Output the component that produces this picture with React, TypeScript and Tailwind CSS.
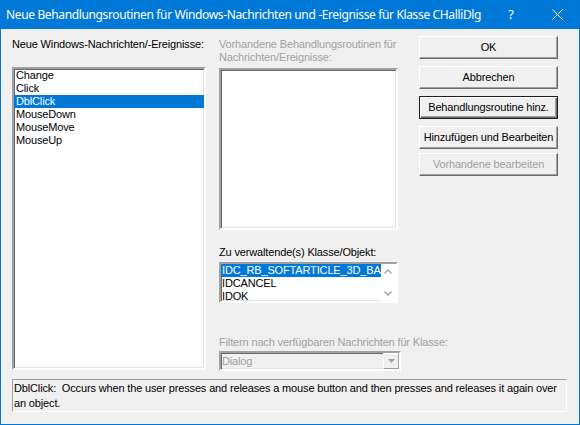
import React from "react";

const sunken =
  "border-2 border-t-[#a0a0a0] border-l-[#a0a0a0] border-r-white border-b-white shadow-[inset_1px_1px_0_#696969,inset_-1px_-1px_0_#e3e3e3]";

function Btn({ label, def, disabled, mt }: { label: string; def?: boolean; disabled?: boolean; mt: string }) {
  return (
    <div
      className={`${mt} h-[23px] w-[139px] flex items-center justify-center bg-[#f0f0f0] ${
        def
          ? "border border-[#1e1e1e] shadow-[inset_1px_1px_0_#ffffff,inset_-1px_-1px_0_#696969,inset_-2px_-2px_0_#a0a0a0]"
          : "border border-t-white border-l-white border-r-[#696969] border-b-[#696969] shadow-[inset_-1px_-1px_0_#a0a0a0]"
      } ${disabled ? "text-[#a0a0a0]" : "text-black"}`}
    >
      {label}
    </div>
  );
}

export default function App() {
  const items = ["Change", "Click", "DblClick", "MouseDown", "MouseMove", "MouseUp"];
  return (
    <div
      className="w-[580px] h-[425px] bg-[#0078d7] flex flex-col overflow-hidden"
      style={{ fontFamily: '"Liberation Sans", Arial, sans-serif' }}
    >
      <div className="h-[29px] flex items-center text-white text-[12px] shrink-0" style={{ fontFamily: '"Noto Sans", "Open Sans", sans-serif' }}>
        <div className="pl-[6px] flex-1 whitespace-nowrap tracking-[-0.36px]">
          Neue Behandlungsroutinen für Windows-Nachrichten und -Ereignisse für Klasse CHalliDlg
        </div>
        <div className="w-[46px] text-center text-[13px]">?</div>
        <div className="w-[46px] flex items-center justify-center">
          <svg width="11" height="11" viewBox="0 0 11 11">
            <path d="M0.5 0.5 L10.5 10.5 M10.5 0.5 L0.5 10.5" stroke="white" strokeWidth="1" />
          </svg>
        </div>
      </div>
      <div className="flex-1 mx-[1px] mb-[1px] bg-[#f0f0f0] flex flex-col text-[11px] leading-[13px] tracking-[-0.15px] pt-[7px] pl-[11px]">
        <div className="flex">
          {/* left column */}
          <div className="w-[194px] flex flex-col">
            <div className="mt-[2px] whitespace-nowrap text-black">Neue Windows-Nachrichten/-Ereignisse:</div>
            <div className={`mt-[16px] h-[303px] bg-white ${sunken} pt-0`}>
              {items.map((it) => (
                <div
                  key={it}
                  className={`h-[13px] pl-[2px] ${it === "DblClick" ? "bg-[#0078d7] text-white" : "text-black"}`}
                >
                  {it}
                </div>
              ))}
            </div>
          </div>
          {/* middle column */}
          <div className="ml-[13px] w-[179px] flex flex-col">
            <div className="mt-[2px] text-[#a0a0a0]">
              <div className="whitespace-nowrap">Vorhandene Behandlungsroutinen für</div>
              <div>Nachrichten/Ereignisse:</div>
            </div>
            <div className={`mt-[4px] h-[162px] bg-white ${sunken}`}></div>
            <div className="mt-[16px] text-black whitespace-nowrap">Zu verwaltende(s) Klasse/Objekt:</div>
            <div className={`mt-[3px] h-[41px] bg-white ${sunken} flex overflow-hidden`}>
              <div className="flex-1 whitespace-nowrap">
                <div className="h-[13px] pl-[1px] bg-[#0078d7] text-white">IDC_RB_SOFTARTICLE_3D_BA</div>
                <div className="h-[13px] pl-[1px] text-black">IDCANCEL</div>
                <div className="h-[13px] pl-[1px] text-black">IDOK</div>
              </div>
              <div className="w-[16px] flex flex-col items-center justify-between py-[5px] bg-white">
                <svg width="8" height="5" viewBox="0 0 8 5">
                  <path d="M0.5 4.5 L4 1 L7.5 4.5" stroke="#a0a0a0" strokeWidth="1.3" fill="none" />
                </svg>
                <svg width="8" height="5" viewBox="0 0 8 5">
                  <path d="M0.5 0.5 L4 4 L7.5 0.5" stroke="#a0a0a0" strokeWidth="1.3" fill="none" />
                </svg>
              </div>
            </div>
            <div className="mt-[33px] text-[#a0a0a0] whitespace-nowrap">Filtern nach verfügbaren Nachrichten für Klasse:</div>
            <div className={`mt-[2px] h-[20px] w-[182px] bg-[#f0f0f0] ${sunken} flex items-center`}>
              <div className="flex-1 pl-[1px] text-[#a0a0a0]">Dialog</div>
              <div className="w-[16px] h-[16px] flex items-center justify-center border border-t-white border-l-white border-r-[#a0a0a0] border-b-[#a0a0a0]">
                <svg width="7" height="4" viewBox="0 0 7 4">
                  <path d="M0 0 L7 0 L3.5 4 Z" fill="#a0a0a0" />
                </svg>
              </div>
            </div>
          </div>
          {/* right column */}
          <div className="ml-[21px] flex flex-col">
            <Btn label="OK" mt="mt-0" />
            <Btn label="Abbrechen" mt="mt-[7px]" />
            <Btn label="Behandlungsroutine hinz." def mt="mt-[7px]" />
            <Btn label="Hinzufügen und Bearbeiten" mt="mt-[7px]" />
            <Btn label="Vorhandene bearbeiten" disabled mt="mt-[4px]" />
          </div>
        </div>
        <div className="mt-[8px] w-[555px] h-[33px] border border-t-[#a0a0a0] border-l-[#a0a0a0] border-r-white border-b-white pl-[1px] pt-[1px] text-black leading-[15px]">
          DblClick:&nbsp; Occurs when the user presses and releases a mouse button and then presses and releases it again over an object.
        </div>
      </div>
    </div>
  );
}
